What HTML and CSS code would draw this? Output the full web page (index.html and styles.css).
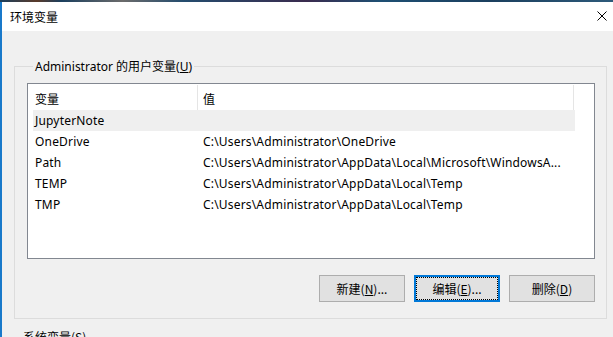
FILE: index.html
```html
<!DOCTYPE html>
<html>
<head>
  <title>环境变量</title>
  <link rel="stylesheet" href="styles.css">
</head>
<body>
  <div class="desktop-strip"></div>
  <div class="window">
    <div class="titlebar">
      <span class="title">环境变量</span>
      <svg class="close" width="10" height="10" viewBox="0 0 10 10">
        <path d="M0.5 0.5 L9.5 9.5 M9.5 0.5 L0.5 9.5" stroke="#000" stroke-width="1" fill="none"/>
      </svg>
    </div>

    <div class="content">
      <fieldset class="group">
        <legend>Administrator 的用户变量(<u>U</u>)</legend>

        <div class="listbox">
          <div class="list-header">
            <div class="col-head col-name">变量</div>
            <div class="col-head col-value">值</div>
          </div>
          <div class="row selected">
            <div class="cell-name">JupyterNote</div>
            <div class="cell-value"></div>
          </div>
          <div class="row">
            <div class="cell-name">OneDrive</div>
            <div class="cell-value">C:\Users\Administrator\OneDrive</div>
          </div>
          <div class="row">
            <div class="cell-name">Path</div>
            <div class="cell-value">C:\Users\Administrator\AppData\Local\Microsoft\WindowsA...</div>
          </div>
          <div class="row">
            <div class="cell-name">TEMP</div>
            <div class="cell-value">C:\Users\Administrator\AppData\Local\Temp</div>
          </div>
          <div class="row">
            <div class="cell-name">TMP</div>
            <div class="cell-value">C:\Users\Administrator\AppData\Local\Temp</div>
          </div>
        </div>

        <div class="buttons">
          <button class="btn">新建(<u>N</u>)...</button>
          <button class="btn focused">编辑(<u>E</u>)...</button>
          <button class="btn">删除(<u>D</u>)</button>
        </div>
      </fieldset>

      <div class="next-group">系统变量(<u>S</u>)</div>
    </div>
  </div>
</body>
</html>
```

FILE: styles.css
```css
body {
  margin: 0;
  width: 613px;
  height: 337px;
  overflow: hidden;
  background: #f0f0f0;
  font-family: "Noto Sans", "Noto Sans CJK SC", sans-serif;
  font-size: 12px;
  color: #000;
}

.desktop-strip {
  height: 2px;
  background: linear-gradient(90deg, #1b3f5e 0%, #5a3a2a 6%, #1b3f5e 10%, #6b6b6b 20%, #244c6e 30%, #3a2b4e 50%, #1e4f73 62%, #1b3f5e 80%, #2d5a7a 100%);
}

.window {
  border-left: 2px solid #1979ca;
  height: 335px;
  background: #f0f0f0;
}

.titlebar {
  height: 29px;
  background: #fff;
  display: flex;
  align-items: center;
  justify-content: space-between;
  padding: 0 6px 0 8px;
}

.title {
  font-family: "Noto Sans CJK SC", sans-serif;
  font-size: 12px;
  margin-top: -1px;
}

.close {
  margin-top: -2px;
}

.content {
  padding: 0 6px 0 12px;
}

.group {
  margin: 0;
  margin-top: 27px;
  padding: 8px 11px 16px 12px;
  border: 1px solid #dcdcdc;
  min-width: 0;
}

.group legend {
  padding: 0 2px;
  margin-left: 6px;
  line-height: 17px;
  font-family: "Noto Sans", "Noto Sans CJK SC", sans-serif;
}

.listbox {
  height: 174px;
  border: 1px solid #828790;
  background: #fff;
}

.list-header {
  display: flex;
  height: 26px;
}

.col-head {
  display: flex;
  align-items: center;
  padding-top: 1px;
  height: 24px;
  margin-top: 1px;
  border-right: 1px solid #e5e5e5;
  font-family: "Noto Sans CJK SC", sans-serif;
}

.col-name {
  width: 162px;
  padding-left: 7px;
}

.col-value {
  width: 370px;
  padding-left: 5px;
}

.row {
  display: flex;
  height: 21px;
  align-items: center;
  margin-left: 5px;
  width: 542px;
  white-space: nowrap;
  letter-spacing: 0.18px;
}

.row.selected {
  background: #efefef;
}

.cell-name {
  width: 162px;
  padding-left: 2px;
}

.cell-value {
  padding-left: 6px;
  overflow: hidden;
  text-overflow: ellipsis;
}

.buttons {
  display: flex;
  justify-content: flex-end;
  gap: 9px;
  margin-top: 16px;
}

.btn {
  width: 86px;
  height: 27px;
  background: #e1e1e1;
  border: 1px solid #adadad;
  font-family: "Noto Sans CJK SC", "Noto Sans", sans-serif;
  font-size: 12px;
  color: #000;
  padding: 0;
}

.btn.focused {
  border: 2px solid #0078d7;
  outline: 1px dotted #000;
  outline-offset: -3px;
}

.next-group {
  margin-top: 9px;
  margin-left: 9px;
  font-family: "Noto Sans CJK SC", sans-serif;
}
```
